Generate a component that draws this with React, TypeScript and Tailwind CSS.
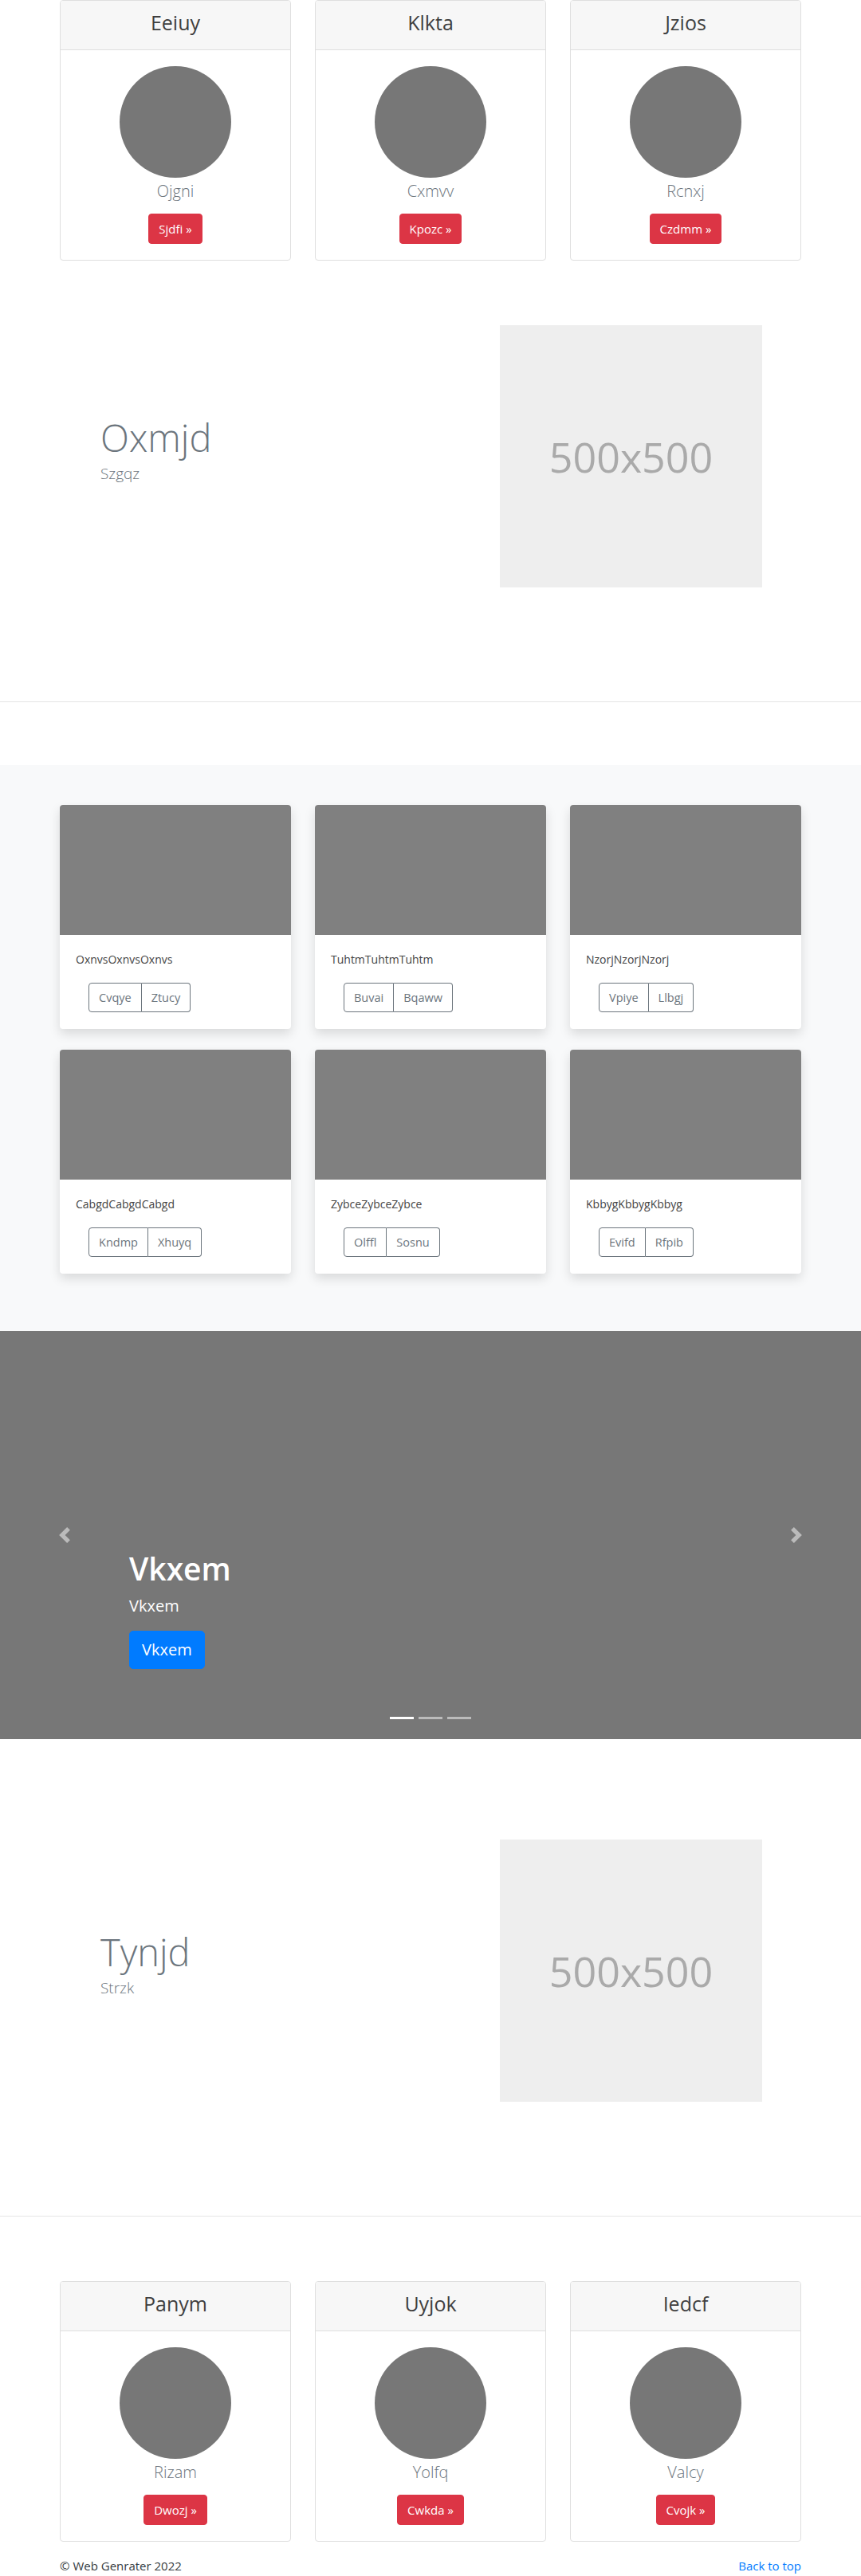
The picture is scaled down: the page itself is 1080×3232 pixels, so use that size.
import React from "react";

type Pricing = { title: string; name: string; btn: string };

const top: Pricing[] = [
  { title: "Eeiuy", name: "Ojgni", btn: "Sjdfi »" },
  { title: "Klkta", name: "Cxmvv", btn: "Kpozc »" },
  { title: "Jzios", name: "Rcnxj", btn: "Czdmm »" },
];

const bottom: Pricing[] = [
  { title: "Panym", name: "Rizam", btn: "Dwozj »" },
  { title: "Uyjok", name: "Yolfq", btn: "Cwkda »" },
  { title: "Iedcf", name: "Valcy", btn: "Cvojk »" },
];

const albums = [
  { text: "OxnvsOxnvsOxnvs", a: "Cvqye", b: "Ztucy" },
  { text: "TuhtmTuhtmTuhtm", a: "Buvai", b: "Bqaww" },
  { text: "NzorjNzorjNzorj", a: "Vpiye", b: "Llbgj" },
  { text: "CabgdCabgdCabgd", a: "Kndmp", b: "Xhuyq" },
  { text: "ZybceZybceZybce", a: "Olffl", b: "Sosnu" },
  { text: "KbbygKbbygKbbyg", a: "Evifd", b: "Rfpib" },
];

function PricingCard({ p }: { p: Pricing }) {
  return (
    <div className="border border-[#dfdfdf] rounded-[4px] overflow-hidden bg-white">
      <div className="h-[62px] bg-[#f7f7f7] border-b border-[#dfdfdf] text-center pt-[10px]">
        <h4 className="text-[25px] font-medium leading-[34px] text-[#3f3f3f]">{p.title}</h4>
      </div>
      <div className="p-[20px] flex flex-col items-center">
        <div className="w-[140px] h-[140px] rounded-full bg-[#777]" />
        <p className="mt-[2px] text-[20px] font-light leading-[30px] text-[#6c757d]">{p.name}</p>
        <button className="mt-[13px] bg-[#dc3545] border border-[#dc3545] text-white text-[15px] leading-[24px] px-[12px] py-[6px] rounded-[4px]">
          {p.btn}
        </button>
      </div>
    </div>
  );
}

function Featurette({ title, sub, pt }: { title: string; sub: string; pt: string }) {
  return (
    <div className={`border-b border-[#e5e5e5] ${pt} pb-[143px]`}>
      <div className="mx-auto w-[930px] flex items-center">
        <div className="w-[552px] pl-[51px]">
          <h2 className="text-[47px] font-light leading-[56px] text-[#6c757d]">{title}</h2>
          <p className="mt-[2px] mb-[16px] text-[19px] font-light leading-[30px] text-[#6c757d]">{sub}</p>
        </div>
        <div className="w-[329px] h-[329px] bg-[#eeeeee] flex items-center justify-center text-[52px] text-[#aaaaaa]">
          500x500
        </div>
      </div>
    </div>
  );
}

export default function App() {
  return (
    <div className="font-['Open_Sans','Noto_Sans',sans-serif] bg-white text-[#212529]">
      {/* pricing cards */}
      <div className="mx-auto w-[930px] grid grid-cols-3 gap-[30px]">
        {top.map((p) => (
          <PricingCard key={p.title} p={p} />
        ))}
      </div>

      <Featurette title="Oxmjd" sub="Szgqz" pt="pt-[81px]" />

      {/* album */}
      <div className="mt-[79px] bg-[#f8f9fa] pt-[50px] pb-[72px]">
        <div className="mx-auto w-[930px] grid grid-cols-3 gap-x-[30px] gap-y-[26px]">
          {albums.map((c) => (
            <div
              key={c.text}
              className="bg-white rounded-[4px] overflow-hidden shadow-[0_6px_14px_rgba(0,0,0,0.13)]"
            >
              <div className="h-[163px] bg-[#808080]" />
              <div className="pt-[20px] pb-[21px] px-[20px]">
                <p className="text-[14px] leading-[21px] text-[#444]">{c.text}</p>
                <div className="mt-[19px] ml-[16px] inline-flex">
                  <button className="h-[37px] border border-[#6c757d] rounded-l-[4px] px-[12px] text-[14.5px] leading-[21px] text-[#6c757d]">
                    {c.a}
                  </button>
                  <button className="h-[37px] border border-l-0 border-[#6c757d] rounded-r-[4px] px-[12px] text-[14.5px] leading-[21px] text-[#6c757d]">
                    {c.b}
                  </button>
                </div>
              </div>
            </div>
          ))}
        </div>
      </div>

      {/* carousel */}
      <div className="relative h-[512px] bg-[#777777] overflow-hidden">
        <button className="absolute left-0 top-0 bottom-0 w-[15%] flex items-center justify-center opacity-50">
          <svg width="20" height="20" viewBox="0 0 8 8" fill="#ffffff">
            <path d="M5.25 0l-4 4 4 4 1.5-1.5L4.25 4l2.5-2.5L5.25 0z" />
          </svg>
        </button>
        <button className="absolute right-0 top-0 bottom-0 w-[15%] flex items-center justify-center opacity-50">
          <svg width="20" height="20" viewBox="0 0 8 8" fill="#ffffff">
            <path d="M2.75 0l-1.5 1.5L3.75 4l-2.5 2.5L2.75 8l4-4-4-4z" />
          </svg>
        </button>
        <div className="absolute left-[15%] right-[15%] bottom-[88px] text-white text-left">
          <h1 className="text-[39px] font-semibold leading-[48px] mb-[8px]">Vkxem</h1>
          <p className="text-[20px] leading-[30px] mb-[16px]">Vkxem</p>
          <button className="bg-[#007bff] border border-[#007bff] text-white text-[20px] leading-[30px] px-[15px] py-[8px] rounded-[5px]">
            Vkxem
          </button>
        </div>
        <div className="absolute left-0 right-0 bottom-[25px] flex justify-center gap-[6px]">
          <span className="w-[30px] h-[3px] bg-white" />
          <span className="w-[30px] h-[3px] bg-white opacity-50" />
          <span className="w-[30px] h-[3px] bg-white opacity-50" />
        </div>
      </div>

      <Featurette title="Tynjd" sub="Strzk" pt="pt-[126px]" />

      {/* pricing cards bottom */}
      <div className="mt-[81px] mx-auto w-[930px] grid grid-cols-3 gap-[30px]">
        {bottom.map((p) => (
          <PricingCard key={p.title} p={p} />
        ))}
      </div>

      {/* footer */}
      <footer className="mx-auto w-[930px] flex justify-between pt-[18px] text-[15px] leading-[24px]">
        <p className="text-[#343a40]">© Web Genrater 2022</p>
        <a href="#" className="text-[#007bff]">
          Back to top
        </a>
      </footer>
    </div>
  );
}
